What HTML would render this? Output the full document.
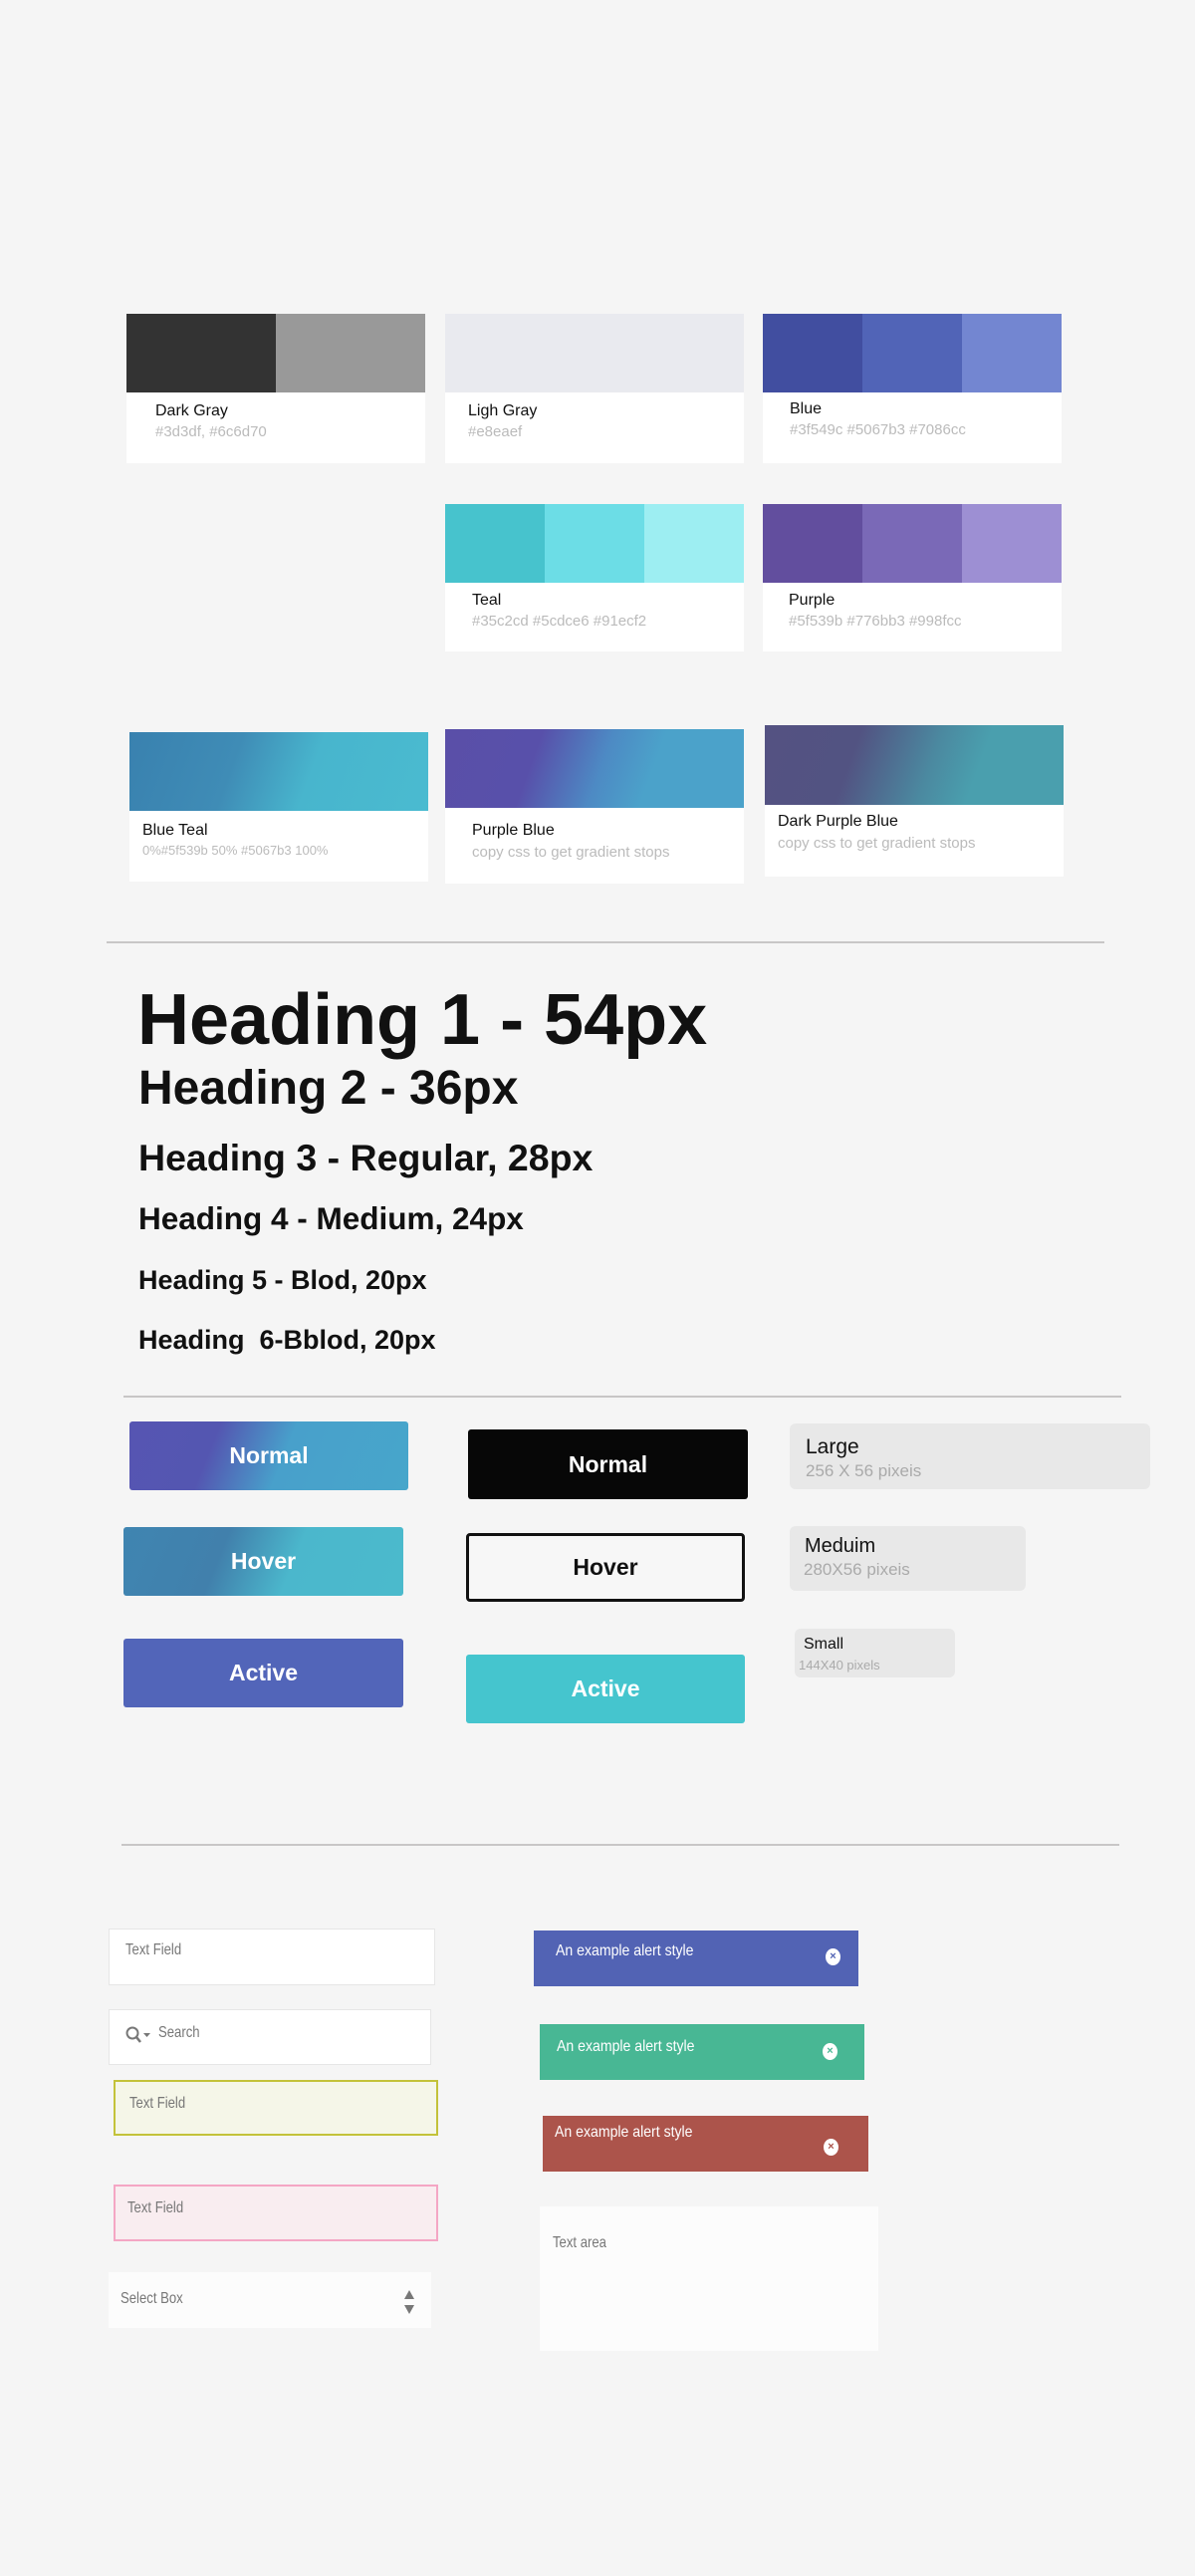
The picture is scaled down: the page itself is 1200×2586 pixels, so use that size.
<!DOCTYPE html>
<html><head><meta charset="utf-8"><style>
*{margin:0;padding:0;box-sizing:border-box}
body{width:1200px;height:2586px;background:#f5f5f5;position:relative;font-family:"Liberation Sans",Arial,sans-serif;overflow:hidden}
.a{position:absolute}
.card{position:absolute;background:#fff}
.sw{position:absolute;left:0;top:0;width:100%;display:flex}
.sw div{flex:1;height:100%}
.lb{position:absolute;font-size:16px;color:#111;white-space:nowrap}
.hx{position:absolute;font-size:15px;color:#bbb;white-space:nowrap}
.hr{position:absolute;height:2px;background:#c8c6c6}
h{position:absolute;font-weight:bold;color:#111;white-space:nowrap;line-height:1}
.btn{position:absolute;border-radius:3px;color:#fff;font-weight:bold;font-size:23px;display:flex;align-items:center;justify-content:center}
.sz{position:absolute;background:#e8e8e8;border-radius:6px}
.fld{position:absolute;background:#fff;border:1px solid #e6e6e6;font-size:16px;color:#777;transform-origin:left}
.fld span{position:absolute;left:16px;top:12px;display:inline-block;transform:scaleX(.82);transform-origin:left;white-space:nowrap}
.al{position:absolute;color:#fff;font-size:16px}
.al span{position:absolute;left:22px;top:12px;display:inline-block;transform:scaleX(.88);transform-origin:left;font-weight:300;white-space:nowrap}
.x{position:absolute;width:15px;height:17px;border-radius:50%;background:#fff;top:18px;font-size:11px;font-weight:bold;text-align:center;line-height:17px}
</style></head><body>

<div class="card" style="left:127px;top:315px;width:300px;height:150px"><div class="sw" style="height:79px"><div style="background:#333"></div><div style="background:#999"></div></div><div class="lb" style="left:29px;top:89px">Dark Gray</div><div class="hx" style="left:29px;top:110px">#3d3df, #6c6d70</div></div>
<div class="card" style="left:447px;top:315px;width:300px;height:150px"><div class="sw" style="height:79px"><div style="background:#e9eaef"></div></div><div class="lb" style="left:23px;top:89px">Ligh Gray</div><div class="hx" style="left:23px;top:110px">#e8eaef</div></div>
<div class="card" style="left:766px;top:315px;width:300px;height:150px"><div class="sw" style="height:79px"><div style="background:#414ea0"></div><div style="background:#5164b7"></div><div style="background:#7386d1"></div></div><div class="lb" style="left:27px;top:87px">Blue</div><div class="hx" style="left:27px;top:108px">#3f549c #5067b3 #7086cc</div></div>
<div class="card" style="left:447px;top:506px;width:300px;height:148px"><div class="sw" style="height:79px"><div style="background:#47c3cd"></div><div style="background:#6cdde6"></div><div style="background:#9deef2"></div></div><div class="lb" style="left:27px;top:88px">Teal</div><div class="hx" style="left:27px;top:109px">#35c2cd #5cdce6 #91ecf2</div></div>
<div class="card" style="left:766px;top:506px;width:300px;height:148px"><div class="sw" style="height:79px"><div style="background:#624e9e"></div><div style="background:#7a69b7"></div><div style="background:#9d8fd3"></div></div><div class="lb" style="left:26px;top:88px">Purple</div><div class="hx" style="left:26px;top:109px">#5f539b #776bb3 #998fcc</div></div>
<div class="card" style="left:130px;top:735px;width:300px;height:150px"><div class="sw" style="height:79px;background:linear-gradient(110deg,#3981af 0%,#3f8cb6 35%,#48b5cd 60%,#4abbd0 100%)"></div><div class="lb" style="left:13px;top:90px">Blue Teal</div><div class="hx" style="left:13px;top:111px;font-size:13px">0%#5f539b 50% #5067b3 100%</div></div>
<div class="card" style="left:447px;top:732px;width:300px;height:155px"><div class="sw" style="height:79px;background:linear-gradient(110deg,#5a4fa8 0%,#5850aa 30%,#4d8ac4 52%,#4ba2ca 68%,#4ba2ca 100%)"></div><div class="lb" style="left:27px;top:93px">Purple Blue</div><div class="hx" style="left:27px;top:115px;font-size:15px">copy css to get gradient stops</div></div>
<div class="card" style="left:768px;top:728px;width:300px;height:152px"><div class="sw" style="height:80px;background:linear-gradient(110deg,#545282 0%,#525382 30%,#4b89a0 55%,#4a9fae 70%,#4a9fae 100%)"></div><div class="lb" style="left:13px;top:88px">Dark Purple Blue</div><div class="hx" style="left:13px;top:110px;font-size:15px">copy css to get gradient stops</div></div>

<div class="hr" style="left:107px;top:945px;width:1002px"></div>

<h style="left:138px;top:988px;font-size:72px">Heading 1 - 54px</h>
<h style="left:139px;top:1069px;font-size:48px">Heading 2 - 36px</h>
<h style="left:139px;top:1144px;font-size:37.5px">Heading 3 - Regular, 28px</h>
<h style="left:139px;top:1208px;font-size:31.5px">Heading 4 - Medium, 24px</h>
<h style="left:139px;top:1272px;font-size:27px">Heading 5 - Blod, 20px</h>
<h style="left:139px;top:1332px;font-size:27px;white-space:pre">Heading  6-Bblod, 20px</h>

<div class="hr" style="left:124px;top:1401px;width:1002px"></div>

<div class="btn" style="left:130px;top:1427px;width:280px;height:69px;background:linear-gradient(112deg,#5655b2 0%,#5456b1 30%,#48a0cb 55%,#47a6cb 100%)">Normal</div>
<div class="btn" style="left:124px;top:1533px;width:281px;height:69px;background:linear-gradient(112deg,#3f85b1 0%,#4180ac 35%,#4bb7cc 60%,#4bbacc 100%)">Hover</div>
<div class="btn" style="left:124px;top:1645px;width:281px;height:69px;background:#5265b9">Active</div>

<div class="btn" style="left:470px;top:1435px;width:281px;height:70px;background:#070707">Normal</div>
<div class="btn" style="left:468px;top:1539px;width:280px;height:69px;background:#f7f7f7;border:3px solid #111;color:#111;border-radius:4px">Hover</div>
<div class="btn" style="left:468px;top:1661px;width:280px;height:69px;background:#45c5ce">Active</div>

<div class="sz" style="left:793px;top:1429px;width:362px;height:66px"><div class="a" style="left:16px;top:12px;font-size:21px;color:#111">Large</div><div class="a" style="left:16px;top:38px;font-size:17px;color:#aaa">256 X 56 pixeis</div></div>
<div class="sz" style="left:793px;top:1532px;width:237px;height:65px"><div class="a" style="left:15px;top:9px;font-size:20px;color:#111">Meduim</div><div class="a" style="left:14px;top:34px;font-size:17px;color:#aaa">280X56 pixeis</div></div>
<div class="sz" style="left:798px;top:1635px;width:161px;height:49px"><div class="a" style="left:9px;top:7px;font-size:16px;color:#111">Small</div><div class="a" style="left:4px;top:29px;font-size:13px;color:#aaa">144X40 pixels</div></div>

<div class="hr" style="left:122px;top:1851px;width:1002px"></div>

<div class="fld" style="left:109px;top:1936px;width:328px;height:57px"><span>Text Field</span></div>
<div class="fld" style="left:109px;top:2017px;width:324px;height:56px"><span style="left:49px;top:14px">Search</span>
<svg class="a" style="left:16px;top:15px" width="28" height="22" viewBox="0 0 28 22"><circle cx="7" cy="8" r="5.5" fill="none" stroke="#777" stroke-width="2"/><line x1="11" y1="12" x2="15" y2="17" stroke="#777" stroke-width="2.5"/><path d="M18 8 L25 8 L21.5 12Z" fill="#777"/></svg></div>
<div class="fld" style="left:114px;top:2088px;width:326px;height:56px;background:#f5f6e8;border:2px solid #c3c23a"><span style="left:14px;top:13px">Text Field</span></div>
<div class="fld" style="left:114px;top:2193px;width:326px;height:57px;background:#f9edf0;border:2px solid #f4a6c4"><span style="left:12px;top:13px">Text Field</span></div>
<div class="fld" style="left:109px;top:2281px;width:324px;height:56px;background:#fcfcfc;border:none"><span style="left:12px;top:18px">Select Box</span>
<svg class="a" style="left:296px;top:17px" width="12" height="26" viewBox="0 0 12 26"><path d="M1 10 L6 1 L11 10Z M1 16 L11 16 L6 25Z" fill="#777"/></svg></div>

<div class="al" style="left:536px;top:1938px;width:326px;height:56px;background:#5263b4"><span>An example alert style</span><div class="x" style="left:293px;color:#5263b4">×</div></div>
<div class="al" style="left:542px;top:2032px;width:326px;height:56px;background:#48b794"><span style="left:17px;top:14px">An example alert style</span><div class="x" style="left:284px;top:19px;color:#48b794">×</div></div>
<div class="al" style="left:545px;top:2124px;width:327px;height:56px;background:#ac544b"><span style="left:12px;top:8px">An example alert style</span><div class="x" style="left:282px;top:23px;color:#ac544b">×</div></div>

<div class="fld" style="left:542px;top:2215px;width:340px;height:145px;background:#fcfcfc;border:none"><span style="left:13px;top:28px">Text area</span></div>
</body></html>
